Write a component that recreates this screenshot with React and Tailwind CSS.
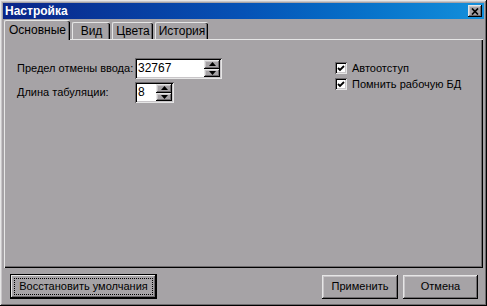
import React from "react";

const raised =
  "shadow-[inset_-1px_-1px_#000,inset_1px_1px_#e6e6e6,inset_-2px_-2px_#6e6b6e,inset_2px_2px_#c8c5c8]";
const sunken =
  "shadow-[inset_1px_1px_#6e6b6e,inset_-1px_-1px_#e6e6e6,inset_2px_2px_#000,inset_-2px_-2px_#c8c5c8]";

const Arrow = ({ up }) => (
  <svg width="7" height="4" viewBox="0 0 7 4">
    {up ? <path d="M3.5 0 L7 4 L0 4 Z" fill="#000" /> : <path d="M0 0 L7 0 L3.5 4 Z" fill="#000" />}
  </svg>
);

const Spin = ({ value, width }) => (
  <div className={`flex h-[21px] bg-white p-[2px] ${sunken}`} style={{ width }}>
    <div className="flex-1 pl-[1px] text-[12px] leading-[17px] text-black">{value}</div>
    <div className="flex w-[16px] flex-col">
      <div className={`flex flex-1 items-center justify-center bg-[#a6a3a6] ${raised}`}>
        <Arrow up />
      </div>
      <div className={`flex flex-1 items-center justify-center bg-[#a6a3a6] ${raised}`}>
        <Arrow />
      </div>
    </div>
  </div>
);

const Check = ({ label }) => (
  <div className="flex h-[16px] items-center">
    <div className={`flex h-[12px] w-[12px] items-center justify-center bg-white ${sunken}`}>
      <svg width="8" height="7" viewBox="0 0 8 7">
        <path d="M1 3 L3 5 L7 1" stroke="#000" strokeWidth="1.8" fill="none" />
      </svg>
    </div>
    <span className="ml-[5px] whitespace-nowrap text-[11px] text-black">{label}</span>
  </div>
);

const Tab = ({ label, active, w }) =>
  active ? (
    <div
      className="relative z-10 -mb-[1px] flex h-[20px] items-center justify-center rounded-tl-[2px] rounded-tr-[2px] border-l border-t border-[#e6e6e6] bg-[#a6a3a6] pb-[1px] shadow-[inset_-1px_0_#000,inset_-2px_0_#6e6b6e] text-[12px] text-black"
      style={{ width: w }}
    >
      {label}
    </div>
  ) : (
    <div
      className="ml-[2px] flex h-[17px] items-center justify-center rounded-tl-[2px] rounded-tr-[2px] border-l border-t border-[#e6e6e6] bg-[#a6a3a6] shadow-[inset_-1px_0_#000,inset_-2px_0_#6e6b6e] text-[12px] text-black"
      style={{ width: w }}
    >
      {label}
    </div>
  );

const Button = ({ label, w, def }) => (
  <div
    className={`flex items-center justify-center whitespace-nowrap bg-[#a6a3a6] text-[11px] text-black ${
      def
        ? "h-[25px] border border-black shadow-[inset_-1px_-1px_#000,inset_1px_1px_#e6e6e6,inset_-2px_-2px_#6e6b6e]"
        : `h-[24px] ${raised}`
    }`}
    style={{ width: w }}
  >
    {def ? (
      <div className="flex h-[17px] w-[139px] items-center justify-center border border-dotted border-black">
        {label}
      </div>
    ) : (
      label
    )}
  </div>
);

export default function App() {
  return (
    <div
      className={`flex h-[306px] w-[487px] flex-col bg-[#a6a3a6] p-[3px] ${raised}`}
      style={{ fontFamily: '"Liberation Sans", Arial, sans-serif' }}
    >
      <div className="flex h-[16px] items-center justify-between bg-gradient-to-r from-[#0a2488] via-[#0652b6] to-[#1490dc] pl-[2px] pr-[2px]">
        <span className="text-[12px] font-bold text-white">Настройка</span>
        <div className={`flex h-[12px] w-[14px] items-center justify-center bg-[#a6a3a6] ${raised}`}>
          <svg width="8" height="7" viewBox="0 0 8 7">
            <path d="M1 0.5 L7 6.5 M7 0.5 L1 6.5" stroke="#000" strokeWidth="1.7" />
          </svg>
        </div>
      </div>

      <div className="mt-[1px] flex h-[19px] items-end pl-[1px]">
        <Tab label="Основные" active w={66} />
        <Tab label="Вид" w={38} />
        <Tab label="Цвета" w={41} />
        <Tab label="История" w={53} />
      </div>

      <div className="mx-[1px] flex h-[229px] border-l border-t border-[#e6e6e6] pl-[12px] pt-[18px] shadow-[inset_-1px_-1px_#000,inset_-2px_-2px_#6e6b6e]">
        <div className="flex w-[318px] flex-col gap-[3px]">
          <div className="flex items-center">
            <span className="w-[118px] whitespace-nowrap text-[11px] text-black">Предел отмены ввода:</span>
            <Spin value="32767" width={87} />
          </div>
          <div className="flex items-center">
            <span className="w-[118px] whitespace-nowrap text-[11px] text-black">Длина табуляции:</span>
            <Spin value="8" width={39} />
          </div>
        </div>
        <div className="mt-[2px] flex flex-col">
          <Check label="Автоотступ" />
          <Check label="Помнить рабочую БД" />
        </div>
      </div>

      <div className="mt-[6px] flex items-center pl-[7px] pr-[6px]">
        <Button label="Восстановить умолчания" w={147} def />
        <div className="flex-1" />
        <Button label="Применить" w={76} />
        <div className="w-[5px]" />
        <Button label="Отмена" w={75} />
      </div>
    </div>
  );
}
